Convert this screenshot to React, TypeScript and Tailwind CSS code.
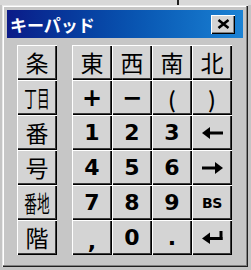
import { ReactNode } from 'react'

const sideKeys = ['条', '丁目', '番', '号', '番地', '階']

const mainKeys = [
  '東', '西', '南', '北',
  '+', '−', '(', ')',
  '1', '2', '3', 'left',
  '4', '5', '6', 'right',
  '7', '8', '9', 'BS',
  ',', '0', '.', 'enter',
]

const kanjiFont = { fontFamily: '"Noto Sans CJK JP", "Noto Sans", sans-serif' }
const boldFont = { fontFamily: '"DejaVu Sans", "Liberation Sans", sans-serif' }

function Key({ children }: { children: ReactNode }) {
  return (
    <div className="h-[35px] flex items-center justify-center bg-[#d4d4d4] text-black shadow-[inset_1px_1px_#ffffff,inset_-1px_-1px_#000000,inset_-2px_-2px_#3c3c3c]">
      {children}
    </div>
  )
}

function ArrowLeft() {
  return (
    <svg width="21" height="12" viewBox="0 0 21 12">
      <rect x="6" y="4.5" width="15" height="3" fill="#000" />
      <polygon points="0,6 8,0 8,12" fill="#000" />
    </svg>
  )
}

function ArrowRight() {
  return (
    <svg width="21" height="12" viewBox="0 0 21 12">
      <rect x="0" y="4.5" width="15" height="3" fill="#000" />
      <polygon points="21,6 13,0 13,12" fill="#000" />
    </svg>
  )
}

function EnterArrow() {
  return (
    <svg width="21" height="13" viewBox="0 0 21 13">
      <rect x="17.5" y="0" width="3" height="9" fill="#000" />
      <rect x="6" y="6" width="14.5" height="3" fill="#000" />
      <polygon points="0,7.5 8,1.5 8,13" fill="#000" />
    </svg>
  )
}

function renderMain(k: string) {
  if (k === 'left') return <ArrowLeft />
  if (k === 'right') return <ArrowRight />
  if (k === 'enter') return <EnterArrow />
  if (k === 'BS') return <span style={boldFont} className="text-[14px] font-bold leading-none tracking-[-0.5px]">BS</span>
  if (k === '(' || k === ')')
    return <span style={kanjiFont} className="text-[22px] font-medium leading-none">{k}</span>
  if ('東西南北'.includes(k))
    return <span style={kanjiFont} className="text-[23px] leading-none">{k}</span>
  if (k === ',')
    return <span style={boldFont} className="text-[22px] font-bold leading-none mt-[8px]">{k}</span>
  if (k === '+' || k === '−')
    return <span style={boldFont} className="text-[24px] font-bold leading-none">{k}</span>
  return <span style={boldFont} className="text-[22px] font-bold leading-none">{k}</span>
}

function renderSide(k: string) {
  if (k.length > 1)
    return (
      <span style={kanjiFont} className="text-[23px] leading-none whitespace-nowrap scale-x-[0.55]">
        {k}
      </span>
    )
  return <span style={kanjiFont} className="text-[23px] leading-none">{k}</span>
}

export default function App() {
  return (
    <div className="w-[251px] h-[270px] bg-[#c4c4c4] overflow-hidden">
      {/* backdrop strip */}
      <div className="h-[5px] flex bg-[#d8d8d8]">
        <div className="w-[177px]" />
        <div className="w-[2px] bg-[#202020]" />
      </div>

      {/* window */}
      <div className="ml-[2px] w-[246px] h-[262px] bg-[#c6c6c6] pt-[5px] pl-[5px] shadow-[inset_1px_1px_#e8e8e8,inset_-1px_-1px_#202020,inset_-2px_-2px_#808080,inset_2px_2px_#ffffff]">
        {/* title bar */}
        <div className="w-[236px] h-[28px] flex items-center justify-between pl-[3px] pr-[8px] bg-linear-to-r from-[#0b1a88] to-[#1b82d4]">
          <span style={kanjiFont} className="text-white text-[17px] font-bold leading-none">
            キーパッド
          </span>
          <div className="w-[24px] h-[19px] flex items-center justify-center bg-[#d4d4d4] shadow-[inset_1px_1px_#ffffff,inset_-1px_-1px_#000000,inset_-2px_-2px_#808080]">
            <svg width="13" height="10" viewBox="0 0 13 10">
              <path d="M1.5 1 L11.5 9 M11.5 1 L1.5 9" stroke="#000" strokeWidth="2.6" />
            </svg>
          </div>
        </div>

        {/* keys */}
        <div className="flex mt-[7px] pl-[10px] gap-[15px]">
          <div className="w-[40px] flex flex-col">
            {sideKeys.map((k) => (
              <Key key={k}>{renderSide(k)}</Key>
            ))}
          </div>
          <div className="w-[160px] grid grid-cols-4">
            {mainKeys.map((k) => (
              <Key key={k}>{renderMain(k)}</Key>
            ))}
          </div>
        </div>
      </div>
    </div>
  )
}
